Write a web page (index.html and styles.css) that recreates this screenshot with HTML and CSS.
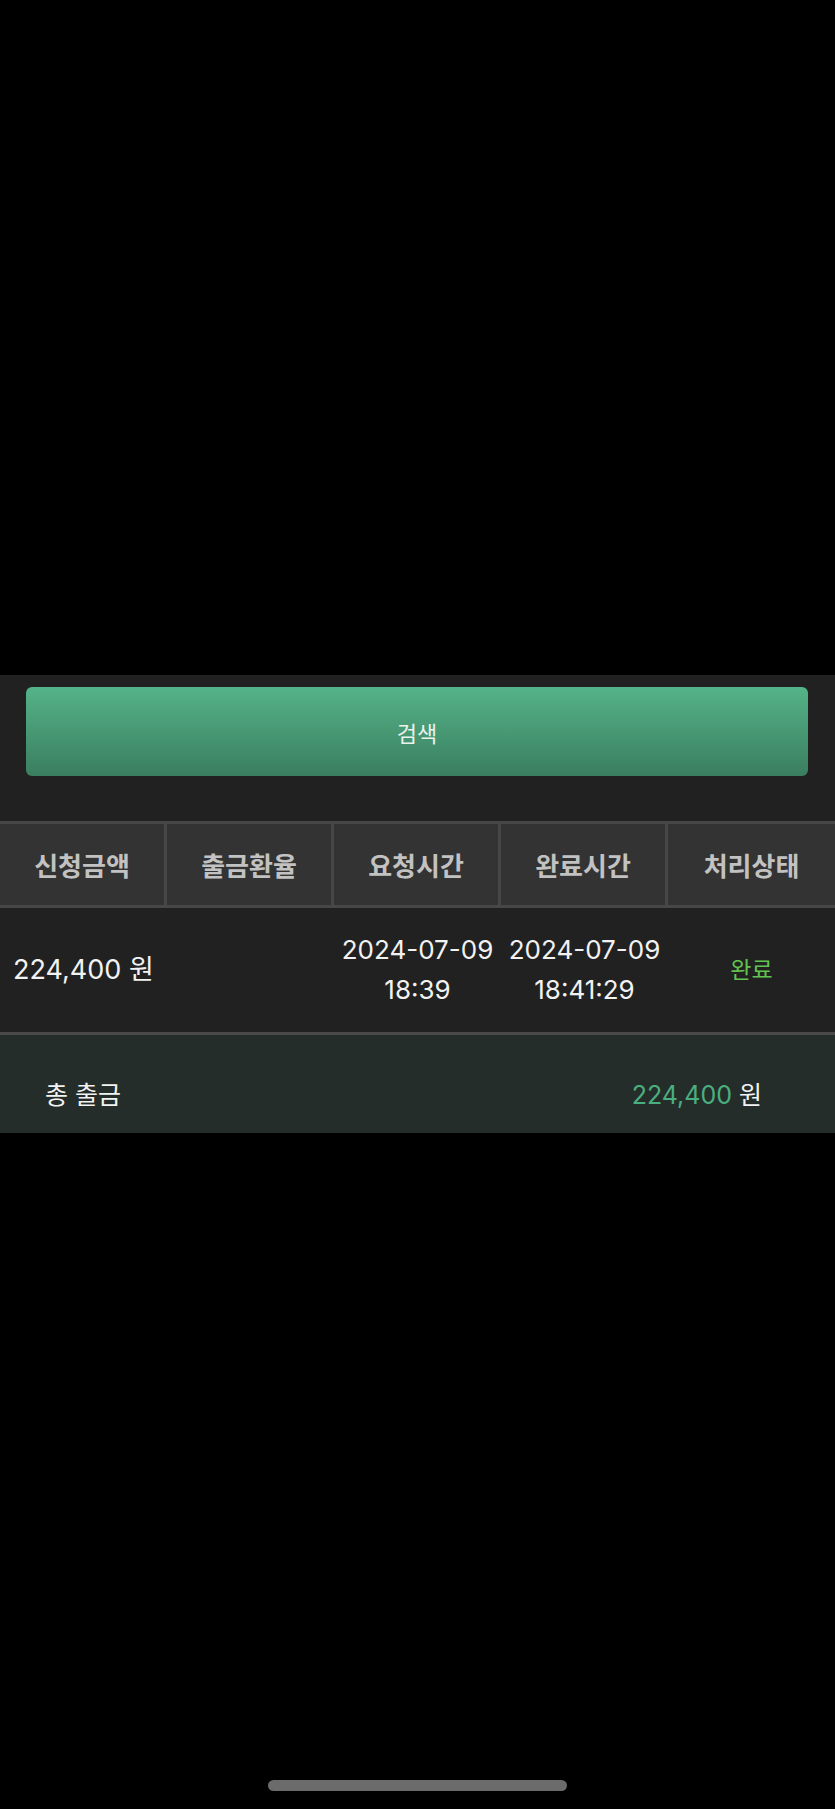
FILE: index.html
```html
<!DOCTYPE html>
<html lang="ko">
<head>
    <meta charset="UTF-8">
    <meta name="viewport" content="width=device-width, initial-scale=1.0">
    <title>출금내역</title>
    <link rel="stylesheet" href="styles.css">
</head>
<body>
    <div class="screen">
        <div class="panel">
            <div class="search-box">
                <button class="search-btn">검색</button>
            </div>

            <div class="list">
                <div class="list-row list-head">
                    <div class="cell">신청금액</div>
                    <div class="cell">출금환율</div>
                    <div class="cell">요청시간</div>
                    <div class="cell">완료시간</div>
                    <div class="cell">처리상태</div>
                </div>
                <div class="list-row list-item">
                    <div class="cell cell-amount">224,400 원</div>
                    <div class="cell"></div>
                    <div class="cell">2024-07-09<br>18:39</div>
                    <div class="cell">2024-07-09<br>18:41:29</div>
                    <div class="cell status-done">완료</div>
                </div>
            </div>

            <div class="total">
                <span>총 출금</span>
                <span><em class="total-num">224,400</em> 원</span>
            </div>
        </div>

        <div class="home-bar"></div>
    </div>
</body>
</html>
```

FILE: styles.css
```css
* {
    margin: 0;
    padding: 0;
    box-sizing: border-box;
}

body {
    background-color: #000;
    font-family: Inter, 'Noto Sans CJK KR', sans-serif;
    color: #f2f2f2;
}

.screen {
    display: flex;
    flex-direction: column;
    height: 1809px;
    padding-top: 675px;
}

.panel {
    background-color: #212121;
}

.search-box {
    padding: 12px 27px 45px 26px;
}

.search-btn {
    display: block;
    width: 100%;
    height: 89px;
    border: none;
    border-radius: 6px;
    background: linear-gradient(to bottom, #55b388, #3a7e60);
    color: #e9f2ed;
    font-family: inherit;
    font-size: 22px;
}

.list-row {
    display: grid;
    grid-template-columns: repeat(5, 1fr);
}

.list-head {
    background-color: #333;
    border-top: 3px solid #474747;
    border-bottom: 3px solid #474747;
    height: 87px;
}

.list-head .cell {
    display: flex;
    align-items: center;
    justify-content: center;
    border-right: 3px solid #474747;
    font-size: 26px;
    font-weight: bold;
    color: #c2c2c2;
}

.list-head .cell:last-child {
    border-right: none;
}

.list-item {
    height: 127px;
    border-bottom: 3px solid #4a4a4a;
}

.list-item .cell {
    display: flex;
    align-items: center;
    justify-content: center;
    text-align: center;
    font-size: 26px;
    line-height: 40px;
    white-space: nowrap;
}

.list-item .cell-amount {
    justify-content: flex-start;
    padding-left: 13px;
    font-size: 27px;
}

.status-done {
    color: #62c450;
    font-size: 23px !important;
}

.total {
    display: flex;
    justify-content: space-between;
    background-color: #252d2a;
    height: 98px;
    padding: 44px 73px 0 45px;
    font-size: 25px;
    line-height: 32px;
}

.total-num {
    font-style: normal;
    color: #4aaf80;
}

.home-bar {
    width: 299px;
    height: 11px;
    margin: auto auto 18px;
    border-radius: 6px;
    background-color: #6b6b6b;
}
```
